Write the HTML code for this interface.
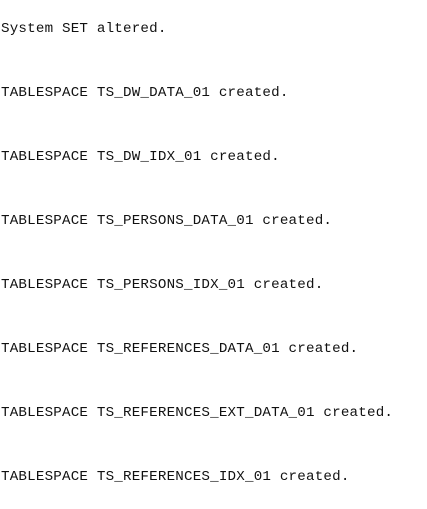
<!DOCTYPE html>
<html><head><meta charset="utf-8"><style>
html,body{margin:0;padding:0;background:#fff;width:427px;height:493px;overflow:hidden}
pre{margin:0;position:absolute;left:1px;top:-3px;font-family:"Courier New","Liberation Mono",monospace;font-size:14.2px;letter-spacing:0.2px;line-height:64px;color:#111}
</style></head><body><pre>System SET altered.
TABLESPACE TS_DW_DATA_01 created.
TABLESPACE TS_DW_IDX_01 created.
TABLESPACE TS_PERSONS_DATA_01 created.
TABLESPACE TS_PERSONS_IDX_01 created.
TABLESPACE TS_REFERENCES_DATA_01 created.
TABLESPACE TS_REFERENCES_EXT_DATA_01 created.
TABLESPACE TS_REFERENCES_IDX_01 created.</pre></body></html>
